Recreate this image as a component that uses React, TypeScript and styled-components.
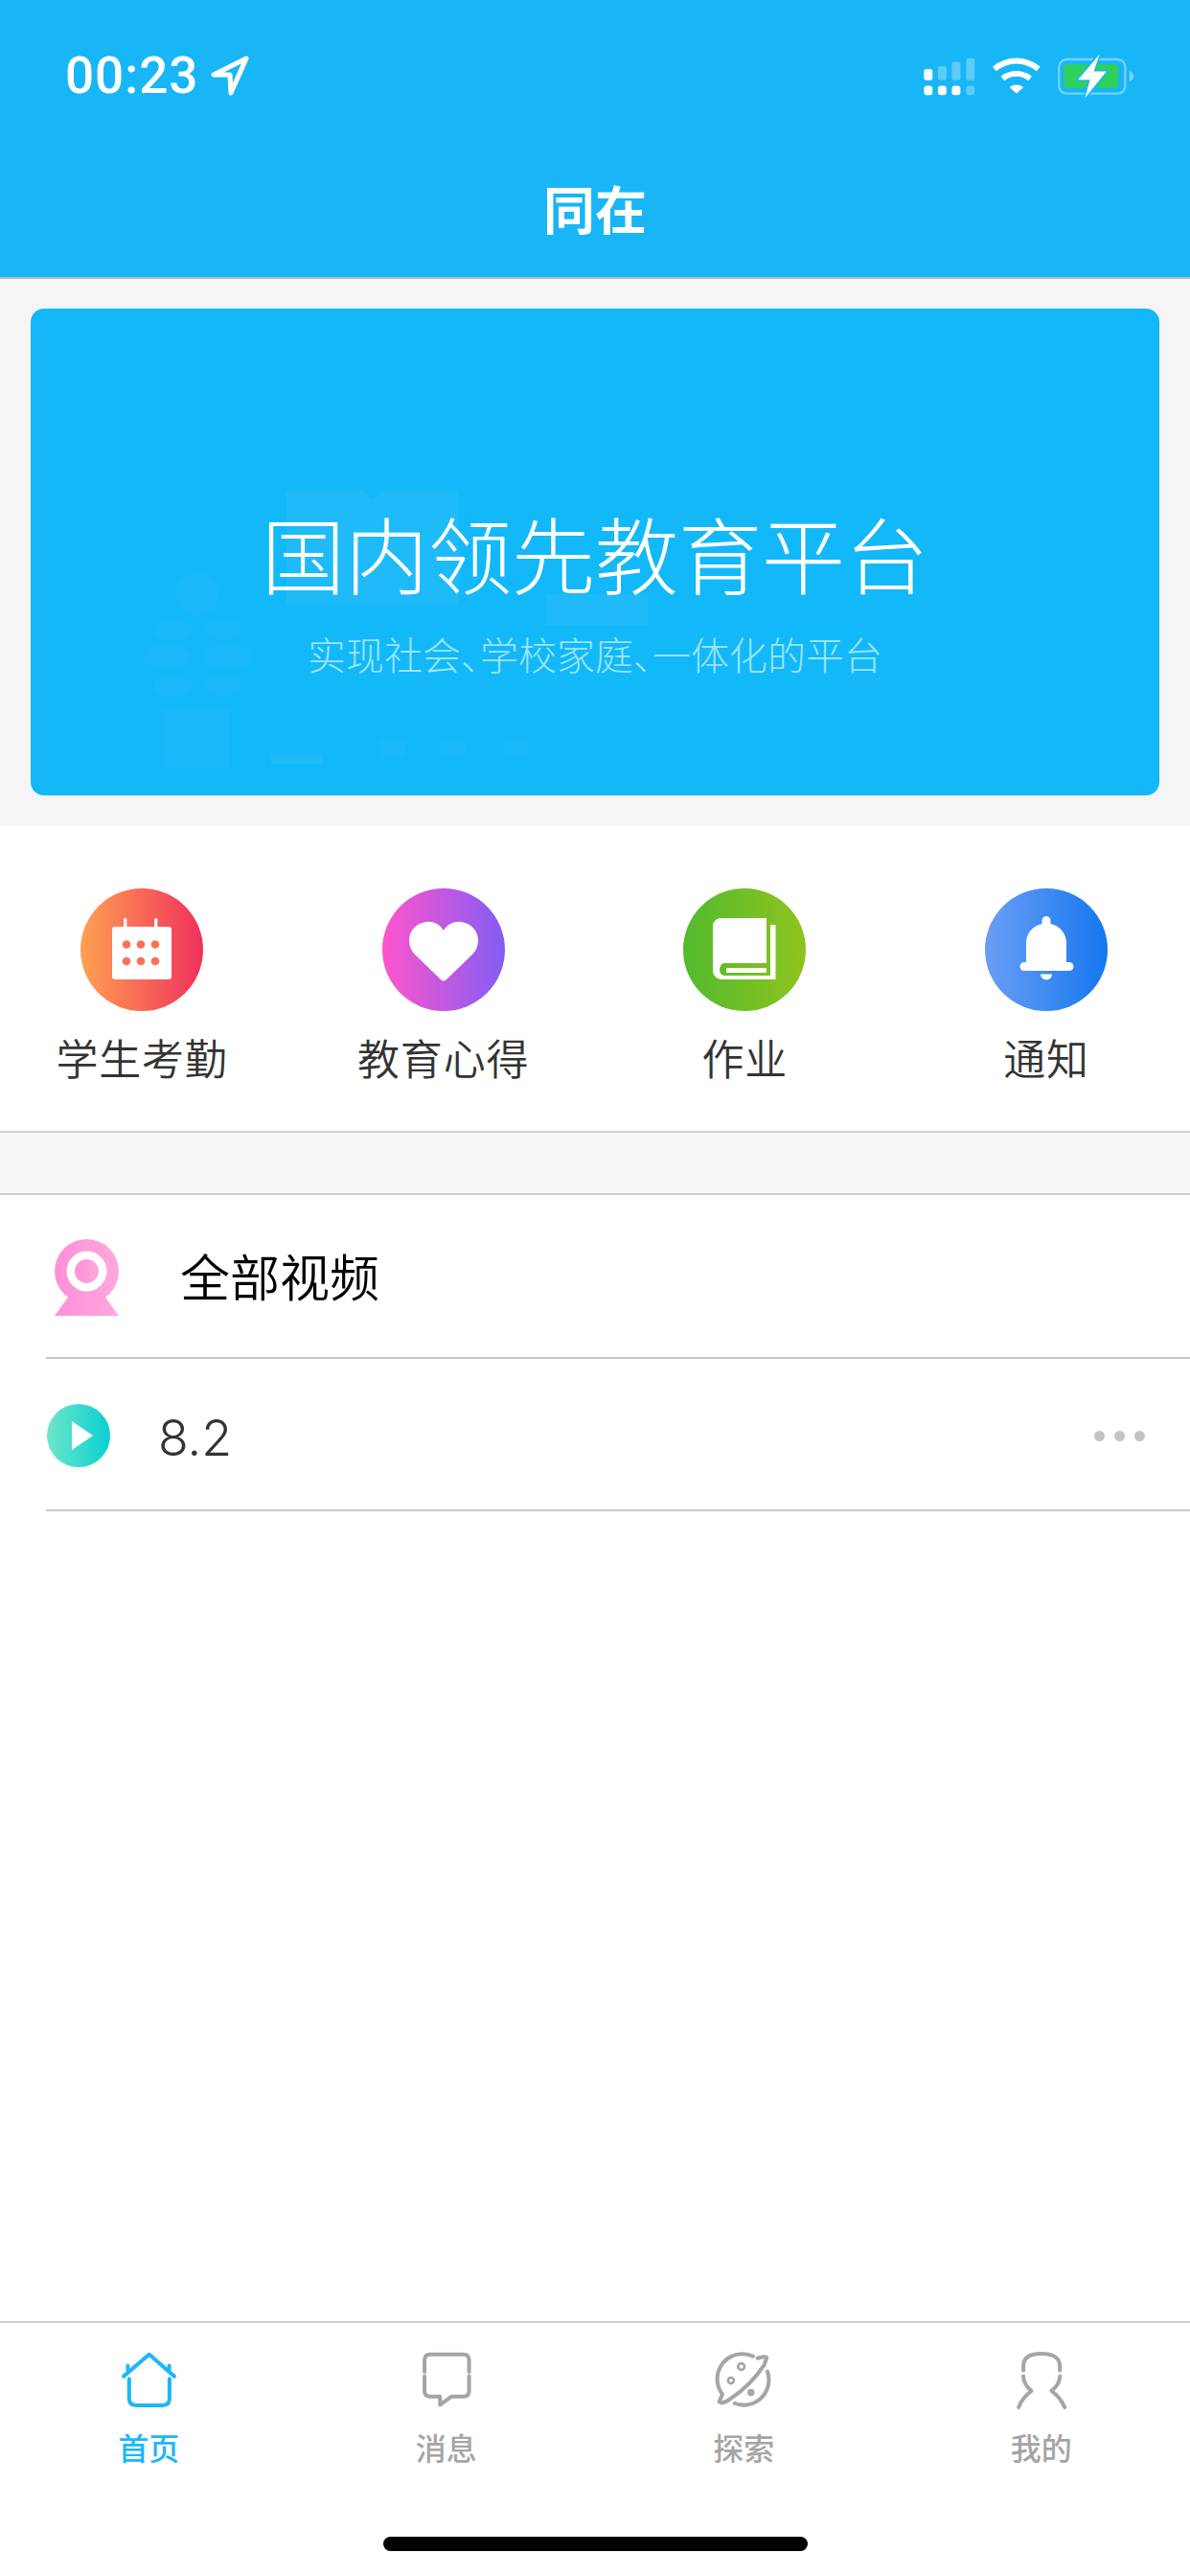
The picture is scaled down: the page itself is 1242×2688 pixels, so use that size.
import React from "react";
import styled, { createGlobalStyle } from "styled-components";

const Global = createGlobalStyle`
  html, body { margin: 0; padding: 0; background: #fff; }
  * { box-sizing: border-box; }
  body { font-family: "Noto Sans CJK SC", "Noto Sans", sans-serif; }
`;

const Page = styled.div`
  width: 1242px;
  height: 2688px;
  display: flex;
  flex-direction: column;
  background: #fff;
  overflow: hidden;
`;

const Header = styled.header`
  height: 291px;
  flex: none;
  background: #18b6f6;
  border-bottom: 2px solid #b4b9bb;
  color: #fff;
  display: flex;
  flex-direction: column;
`;

const StatusBar = styled.div`
  height: 54px;
  margin-top: 52px;
  padding: 0 0 0 68px;
  display: flex;
  align-items: center;
  justify-content: space-between;
`;

const TimeWrap = styled.div`
  display: flex;
  align-items: center;
  gap: 13px;
`;

const Time = styled.span`
  font-family: Roboto, sans-serif;
  font-weight: 500;
  font-size: 53px;
  line-height: 54px;
  letter-spacing: 1px;
`;

const StatusIcons = styled.svg`
  width: 227px;
  height: 43px;
  margin-right: 55px;
  overflow: visible;
`;

const Title = styled.h1`
  margin: 73px 0 0;
  height: 76px;
  font-size: 54px;
  line-height: 76px;
  font-weight: 700;
  text-align: center;
`;

const BannerZone = styled.div`
  flex: none;
  background: #f5f5f5;
  padding: 31px 32px 32px;
`;

const Banner = styled.section`
  position: relative;
  height: 508px;
  border-radius: 14px;
  background: #13b8f9;
  overflow: hidden;
  display: flex;
  flex-direction: column;
  align-items: center;
  padding-top: 201px;
`;

const BannerArt = styled.svg`
  position: absolute;
  inset: 0;
  width: 100%;
  height: 100%;
`;

const BannerTitle = styled.div`
  position: relative;
  font-size: 87px;
  line-height: 106px;
  font-weight: 300;
  color: #fff;
  white-space: nowrap;
`;

const BannerSub = styled.div`
  position: relative;
  margin-top: 27px;
  font-size: 40px;
  line-height: 52px;
  font-weight: 300;
  color: #9be4fb;
  white-space: nowrap;
  font-feature-settings: "palt";
`;

const Shortcuts = styled.nav`
  flex: none;
  height: 320px;
  padding-top: 65px;
  display: grid;
  grid-template-columns: repeat(4, 296px);
  column-gap: 18.67px;
  align-content: start;
  border-bottom: 2px solid #d0d0d0;
`;

const Shortcut = styled.div`
  display: flex;
  flex-direction: column;
  align-items: center;
`;

const RoundIcon = styled.svg`
  width: 128px;
  height: 128px;
  display: block;
`;

const ShortcutLabel = styled.span`
  margin-top: 18px;
  font-size: 44px;
  line-height: 60px;
  letter-spacing: 0.8px;
  color: #333;
  font-weight: 350;
  white-space: nowrap;
`;

const Gap = styled.div`
  flex: none;
  height: 65px;
  background: #f6f6f6;
  border-bottom: 2px solid #cfcfcf;
`;

const Row = styled.div<{ $h: number }>`
  flex: none;
  height: ${(p) => p.$h}px;
  margin-left: 48px;
  padding-top: 3px;
  display: flex;
  align-items: center;
  border-bottom: 2px solid #c9c9c9;
`;

const CamIcon = styled.svg`
  width: 67px;
  height: 80px;
  margin: 0 0 0 9px;
  flex: none;
`;

const RowHeading = styled.span`
  margin: 0 0 5px 64px;
  font-size: 52px;
  line-height: 60px;
  color: #000;
  font-weight: 350;
`;

const PlayIcon = styled.svg`
  width: 66px;
  height: 66px;
  margin-left: 1px;
  flex: none;
`;

const RowText = styled.span`
  margin: 5px 0 0 50px;
  font-family: Inter, sans-serif;
  font-weight: 300;
  font-size: 52px;
  line-height: 60px;
  color: #333;
`;

const More = styled.div`
  margin-left: auto;
  margin-right: 47px;
  display: flex;
  gap: 10px;
`;

const Dot = styled.i`
  width: 11px;
  height: 11px;
  border-radius: 50%;
  background: #c4c4c4;
`;

const Spacer = styled.div`
  flex: 1;
`;

const TabBar = styled.footer`
  flex: none;
  height: 266px;
  border-top: 2px solid #cdcdcd;
  display: flex;
  flex-direction: column;
`;

const Tabs = styled.div`
  display: grid;
  grid-template-columns: repeat(4, 1fr);
  padding-top: 27px;
`;

const Tab = styled.div<{ $active?: boolean }>`
  display: flex;
  flex-direction: column;
  align-items: center;
  color: ${(p) => (p.$active ? "#1db7f7" : "#a5a5a5")};
`;

const TabIcon = styled.svg`
  width: 64px;
  height: 64px;
  fill: none;
  stroke: currentColor;
  stroke-width: 12;
  stroke-linecap: round;
  stroke-linejoin: round;
`;

const TabLabel = styled.span`
  margin-top: 16px;
  font-size: 32px;
  line-height: 44px;
  font-weight: 500;
`;

const Indicator = styled.div`
  width: 443px;
  height: 15px;
  border-radius: 8px;
  background: #000;
  margin: auto auto 26px;
`;

const LocationArrow = () => (
  <svg width="40" height="42" viewBox="0 0 40 42">
    <path d="M37 3 L3 20 L20 20 L21 39 Z" fill="none" stroke="#fff" strokeWidth="5" strokeLinejoin="round" />
  </svg>
);

const Shortcut1 = () => (
  <RoundIcon viewBox="0 0 128 128">
    <defs>
      <linearGradient id="g1"><stop offset="0" stopColor="#ffa152" /><stop offset="1" stopColor="#f0305b" /></linearGradient>
    </defs>
    <circle cx="64" cy="64" r="64" fill="url(#g1)" />
    <rect x="33" y="40" width="62" height="55" rx="3" fill="#fff" />
    <rect x="45" y="31" width="3.4" height="10" rx="1.5" fill="#fff" />
    <rect x="77" y="31" width="3.4" height="10" rx="1.5" fill="#fff" />
    {[48, 63, 78].map((x) => (
      <React.Fragment key={x}>
        <circle cx={x} cy="58.5" r="4.3" fill="#ff7058" />
        <circle cx={x} cy="76" r="4.3" fill="#ff7058" />
      </React.Fragment>
    ))}
  </RoundIcon>
);

const Shortcut2 = () => (
  <RoundIcon viewBox="0 0 128 128">
    <defs>
      <linearGradient id="g2"><stop offset="0" stopColor="#ff55cc" /><stop offset="1" stopColor="#835df5" /></linearGradient>
    </defs>
    <circle cx="64" cy="64" r="64" fill="url(#g2)" />
    <path d="M64 44 C60 37 52 34 46 35 C36 36 28 44 28 54 C28 60 30 65 34 69 L61 95 Q64 98 67 95 L94 69 C98 65 100 60 100 54 C100 44 92 36 82 35 C76 34 68 37 64 44Z" fill="#fff" />
  </RoundIcon>
);

const Shortcut3 = () => (
  <RoundIcon viewBox="0 0 128 128">
    <defs>
      <linearGradient id="g3"><stop offset="0" stopColor="#52ba2e" /><stop offset="1" stopColor="#8fc31f" /></linearGradient>
    </defs>
    <circle cx="64" cy="64" r="64" fill="url(#g3)" />
    <path d="M39 31 H87 V78 H43 C37 78 36 91 43 91 H91 V38 H96.5 V95 H41 C35 95 31 91 31 85 V39 C31 35 35 31 39 31Z" fill="#fff" />
    <rect x="45" y="83" width="42" height="5" fill="#fff" />
  </RoundIcon>
);

const Shortcut4 = () => (
  <RoundIcon viewBox="0 0 128 128">
    <defs>
      <linearGradient id="g4"><stop offset="0" stopColor="#6a9ef5" /><stop offset="1" stopColor="#1577ee" /></linearGradient>
    </defs>
    <circle cx="64" cy="64" r="64" fill="url(#g4)" />
    <path d="M59.5 37 V33.5 A4.5 4.5 0 0 1 68.5 33.5 V37 C78 39 85 47 85 57 V77 H88 A4.5 4.5 0 0 1 88 86 H41 A4.5 4.5 0 0 1 41 77 H43 V57 C43 47 50 39 59.5 37Z" fill="#fff" />
    <path d="M58 89.5 H70 A6 6 0 0 1 58 89.5Z" fill="#fff" />
  </RoundIcon>
);

export default function App() {
  return (
    <Page>
      <Global />
      <Header>
        <StatusBar>
          <TimeWrap>
            <Time>00:23</Time>
            <LocationArrow />
          </TimeWrap>
          <StatusIcons viewBox="60 80 680 130">
            <g fill="#fff">
              <rect x="70" y="122" width="27" height="36" rx="7" />
              <rect x="70" y="175" width="27" height="30" rx="9" />
              <rect x="114" y="175" width="27" height="30" rx="9" />
              <rect x="158" y="175" width="27" height="30" rx="9" />
            </g>
            <g fill="#fff" opacity="0.3">
              <rect x="114" y="113" width="27" height="45" rx="7" />
              <rect x="158" y="100" width="27" height="58" rx="7" />
              <rect x="203" y="88" width="27" height="70" rx="7" />
              <rect x="203" y="175" width="27" height="30" rx="9" />
            </g>
            <g fill="none" stroke="#fff" strokeWidth="18">
              <path d="M292 122 C335 88 388 88 431 122" />
              <path d="M318 152 C345 132 378 132 405 152" />
            </g>
            <path d="M340 180 C352 170 372 170 384 180 L362 200 Z" fill="#fff" />
            <rect x="496" y="92" width="209" height="108" rx="24" fill="none" stroke="#fff" strokeOpacity="0.4" strokeWidth="7" />
            <rect x="511" y="108" width="172" height="74" rx="11" fill="#30d158" />
            <path d="M718 128 C728 132 732 138 732 145 C732 152 728 158 718 162 Z" fill="#fff" fillOpacity="0.4" />
            <path d="M624 76 L556 156 H594 L578 214 L646 130 H606 Z" fill="#fff" stroke="#18b6f6" strokeWidth="10" strokeLinejoin="round" paintOrder="stroke" />
          </StatusIcons>
        </StatusBar>
        <Title>同在</Title>
      </Header>

      <BannerZone>
        <Banner>
          <BannerArt viewBox="32 322 1178 508">
            <g fill="#fff" opacity="0.05">
              <path d="M299 512 H378 L389 522 L400 512 H479 V632 H299 Z" />
              <rect x="570" y="620" width="106" height="32" />
              <rect x="283" y="787" width="54" height="10" />
            </g>
            <g fill="#fff" opacity="0.025">
              <rect x="397" y="772" width="26" height="18" />
              <rect x="460" y="772" width="26" height="18" />
              <rect x="525" y="772" width="26" height="18" />
              <circle cx="206" cy="620" r="22" />
              <ellipse cx="180" cy="657" rx="20" ry="11" />
              <ellipse cx="232" cy="657" rx="20" ry="11" />
              <ellipse cx="175" cy="685" rx="25" ry="13" />
              <ellipse cx="238" cy="685" rx="25" ry="13" />
              <ellipse cx="180" cy="715" rx="20" ry="11" />
              <ellipse cx="232" cy="715" rx="20" ry="11" />
              <rect x="170" y="740" width="70" height="60" />
            </g>
            <g fill="none" stroke="#fff" strokeOpacity="0.012" strokeWidth="3">
              <path d="M206 470 V780" />
              <rect x="510" y="460" width="100" height="130" rx="12" />
              <path d="M370 495 H600 V800" />
            </g>
          </BannerArt>
          <BannerTitle>国内领先教育平台</BannerTitle>
          <BannerSub>实现社会、学校家庭、一体化的平台</BannerSub>
        </Banner>
      </BannerZone>

      <Shortcuts>
        <Shortcut>
          <Shortcut1 />
          <ShortcutLabel>学生考勤</ShortcutLabel>
        </Shortcut>
        <Shortcut>
          <Shortcut2 />
          <ShortcutLabel>教育心得</ShortcutLabel>
        </Shortcut>
        <Shortcut>
          <Shortcut3 />
          <ShortcutLabel>作业</ShortcutLabel>
        </Shortcut>
        <Shortcut>
          <Shortcut4 />
          <ShortcutLabel>通知</ShortcutLabel>
        </Shortcut>
      </Shortcuts>

      <Gap />

      <Row $h={171}>
        <CamIcon viewBox="0 0 67 80">
          <defs>
            <linearGradient id="g5"><stop offset="0" stopColor="#ff8fd8" /><stop offset="1" stopColor="#ffa8dc" /></linearGradient>
          </defs>
          <path d="M16 58 H51 L67 80 H0 Z" fill="url(#g5)" />
          <circle cx="33.5" cy="33.5" r="33.5" fill="url(#g5)" />
          <circle cx="33.5" cy="33.5" r="21" fill="#fff" />
          <circle cx="33.5" cy="33.5" r="12.5" fill="url(#g5)" />
        </CamIcon>
        <RowHeading>全部视频</RowHeading>
      </Row>

      <Row $h={159}>
        <PlayIcon viewBox="0 0 66 66">
          <defs>
            <linearGradient id="g6"><stop offset="0" stopColor="#6fe6c9" /><stop offset="1" stopColor="#08d0d2" /></linearGradient>
          </defs>
          <circle cx="33" cy="33" r="33" fill="url(#g6)" />
          <path d="M26 18 L48 33 L26 48 Z" fill="#fff" />
        </PlayIcon>
        <RowText>8.2</RowText>
        <More>
          <Dot />
          <Dot />
          <Dot />
        </More>
      </Row>

      <Spacer />

      <TabBar>
        <Tabs>
          <Tab $active>
            <TabIcon viewBox="130 155 190 190">
              <path d="M148 240 L227 172 L305 240" />
              <path d="M161 207 V222 M289 207 V222" />
              <path d="M165 248 V308 Q165 330 187 330 H268 Q290 330 290 308 V248" />
            </TabIcon>
            <TabLabel>首页</TabLabel>
          </Tab>
          <Tab>
            <TabIcon viewBox="1060 155 190 190">
              <path d="M1087 226 V190 Q1087 172 1105 172 H1207 Q1225 172 1225 190 V226" />
              <path d="M1225 240 V285 Q1225 303 1207 303 H1170 L1135 328 V303 H1105 Q1087 303 1087 285 V240" />
            </TabIcon>
            <TabLabel>消息</TabLabel>
          </Tab>
          <Tab>
            <TabIcon viewBox="137 155 190 190">
              <path d="M262 178 A78 78 0 0 0 166 295" />
              <path d="M205 324 A78 78 0 0 0 306 225" />
              <path d="M166 297 L157 318 Q158 324 175 320 Q250 275 296 205 L304 182 Q300 176 276 184" />
              <circle cx="225" cy="210" r="10" strokeWidth="8" />
              <circle cx="193" cy="253" r="9" strokeWidth="8" />
              <circle cx="255" cy="290" r="5" />
            </TabIcon>
            <TabLabel>探索</TabLabel>
          </Tab>
          <Tab>
            <TabIcon viewBox="1066 155 190 190">
              <path d="M1105 222 V208 C1105 182 1125 170 1160 170 C1195 170 1218 182 1218 208 V222" />
              <path d="M1105 240 Q1105 264 1130 285 Q1102 305 1090 336" />
              <path d="M1218 240 Q1218 264 1192 285 Q1220 305 1233 336" />
            </TabIcon>
            <TabLabel>我的</TabLabel>
          </Tab>
        </Tabs>
        <Indicator />
      </TabBar>
    </Page>
  );
}
